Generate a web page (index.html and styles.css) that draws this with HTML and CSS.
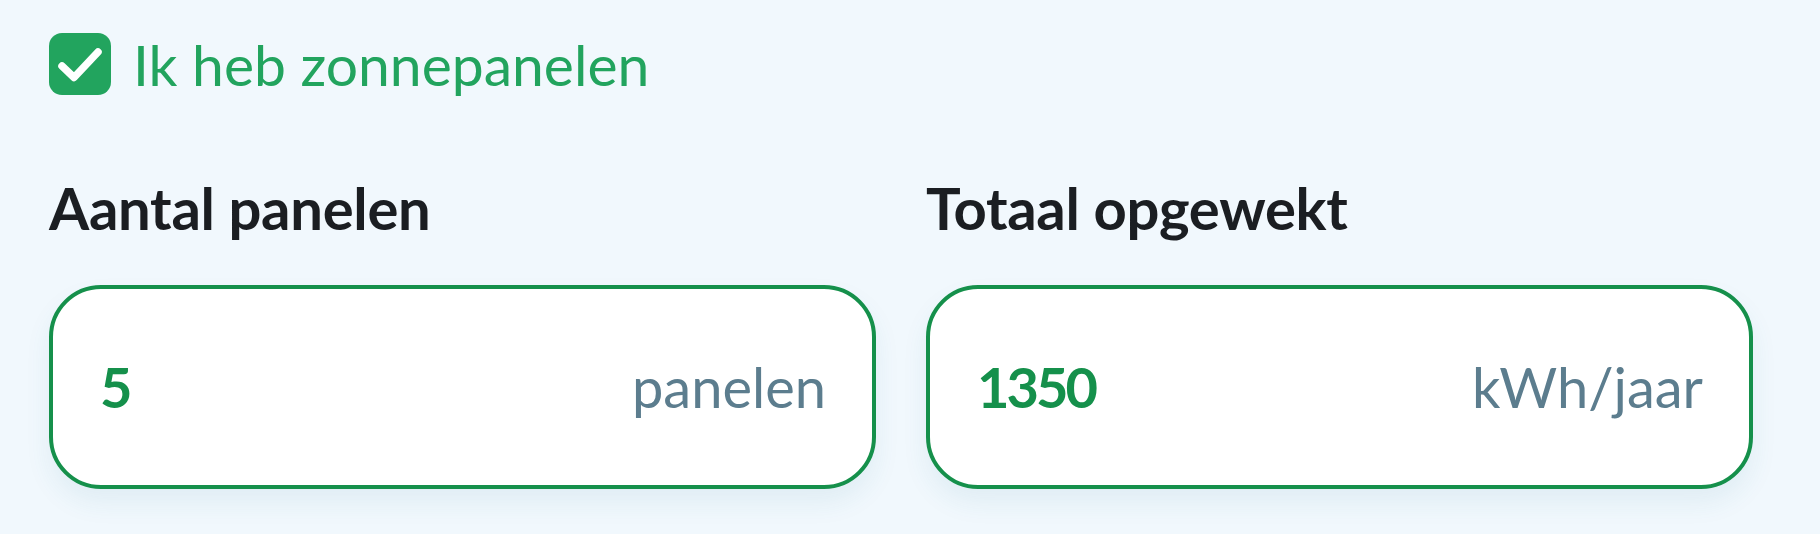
FILE: index.html
```html
<!DOCTYPE html>
<html lang="nl">

<head>
    <meta charset="UTF-8">
    <meta name="viewport" content="width=device-width, initial-scale=1.0">
    <title>Zonnepanelen</title>
    <link rel="stylesheet" href="styles.css">
</head>

<body>
    <div class="solar-form">
        <label class="check-row">
            <span class="check-box">
                <svg viewBox="0 0 62 62" width="62" height="62">
                    <path d="M13 33 L25 44.5 L49 19" fill="none" stroke="#ffffff" stroke-width="7.5"
                        stroke-linecap="round" stroke-linejoin="round" />
                </svg>
            </span>
            <span class="check-text">Ik heb zonnepanelen</span>
        </label>

        <div class="form-row">
            <div class="form-group">
                <div class="field-label">Aantal panelen</div>
                <div class="field-box">
                    <span class="field-value">5</span>
                    <span class="field-unit">panelen</span>
                </div>
            </div>

            <div class="form-group">
                <div class="field-label">Totaal opgewekt</div>
                <div class="field-box">
                    <span class="field-value">1350</span>
                    <span class="field-unit">kWh/jaar</span>
                </div>
            </div>
        </div>
    </div>
</body>

</html>
```

FILE: styles.css
```css
:root {
    --green: #22a45e;
    --green-dark: #15904b;
    --text-dark: #1b1e22;
    --unit-color: #5c7d8e;
    --background-color: #f1f8fd;
    --white: #ffffff;
}

* {
    box-sizing: border-box;
    margin: 0;
    padding: 0;
}

body {
    font-family: 'Lato', 'Liberation Sans', sans-serif;
    background-color: var(--background-color);
    height: 534px;
    overflow: hidden;
}

.solar-form {
    padding: 33px 67px 0 49px;
}

.check-row {
    display: flex;
    align-items: center;
    gap: 22px;
    height: 62px;
}

.check-box {
    width: 62px;
    height: 62px;
    border-radius: 13px;
    background-color: var(--green);
    display: flex;
}

.check-text {
    font-size: 57px;
    line-height: 1.2;
    color: var(--green);
}

.form-row {
    display: grid;
    grid-template-columns: 1fr 1fr;
    gap: 50px;
    margin-top: 78px;
}

.field-label {
    font-size: 58px;
    line-height: 1.2;
    font-weight: bold;
    color: var(--text-dark);
    letter-spacing: -0.3px;
    margin-bottom: 42px;
}

.field-box {
    height: 204px;
    display: flex;
    align-items: center;
    justify-content: space-between;
    padding: 0 46px 0 47px;
    background-color: var(--white);
    border: 4px solid var(--green-dark);
    border-radius: 52px;
    box-shadow: 0 14px 26px rgba(40, 110, 140, 0.08);
}

.field-value {
    font-size: 56px;
    font-weight: bold;
    letter-spacing: -3px;
    color: var(--green-dark);
}

.field-unit {
    font-size: 56px;
    color: var(--unit-color);
}
```
